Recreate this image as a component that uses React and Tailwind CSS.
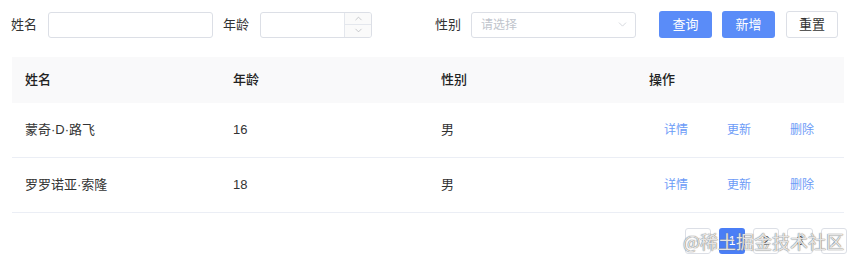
import { ChevronUp, ChevronDown, ChevronLeft, ChevronRight } from 'lucide-react'

const ROWS = [
  { name: '蒙奇·D·路飞', age: 16, sex: '男' },
  { name: '罗罗诺亚·索隆', age: 18, sex: '男' },
]

const font = { fontFamily: '"Liberation Sans", "Noto Sans CJK SC", sans-serif' }

export default function App() {
  return (
    <div className="relative w-[856px] h-[267px] bg-white text-[13px] text-[#333]" style={font}>
      {/* Search bar */}
      <div className="flex items-center h-[48px] pt-[1px]">
        <label className="ml-[11px] w-[37px] text-[#333]">姓名</label>
        <div className="w-[165px] h-[26px] border border-[#dcdfe6] rounded-[3px]" />
        <label className="ml-[10px] w-[37px]">年龄</label>
        <div className="flex w-[112px] h-[26px] border border-[#dcdfe6] rounded-[3px] overflow-hidden">
          <div className="flex-1" />
          <div className="w-[27px] flex flex-col border-l border-[#e4e7ed] bg-[#fafafa] text-[#b0b3b8]">
            <div className="flex-1 flex items-center justify-center border-b border-[#e4e7ed]"><ChevronUp size={11} strokeWidth={1.5} /></div>
            <div className="flex-1 flex items-center justify-center"><ChevronDown size={11} strokeWidth={1.5} /></div>
          </div>
        </div>
        <label className="ml-[63px] w-[36px]">性别</label>
        <div className="flex items-center justify-between w-[165px] h-[26px] border border-[#dcdfe6] rounded-[3px] pl-[9px] pr-[6px] text-[12px] text-[#c0c4cc]">
          <span>请选择</span>
          <ChevronDown size={13} strokeWidth={1.2} className="text-[#c0c4cc]" />
        </div>
        <button className="ml-[23px] w-[53px] h-[27px] rounded-[3px] bg-[#5a8cf8] text-white">查询</button>
        <button className="ml-[10px] w-[53px] h-[27px] rounded-[3px] bg-[#5a8cf8] text-white">新增</button>
        <button className="ml-[11px] w-[52px] h-[27px] rounded-[3px] border border-[#dcdfe6] bg-white text-[#333]">重置</button>
      </div>

      {/* Table */}
      <div className="mx-[12px] mt-[9px]">
        <div className="grid grid-cols-4 h-[46px] items-center bg-[#f9f9fa] font-medium text-[#222]">
          <div className="pl-[13px]">姓名</div>
          <div className="pl-[13px]">年龄</div>
          <div className="pl-[13px]">性别</div>
          <div className="pl-[13px]">操作</div>
        </div>
        {ROWS.map(r => (
          <div key={r.name} className="grid grid-cols-4 h-[55px] items-center border-b border-[#ebeef5]">
            <div className="pl-[13px]">{r.name}</div>
            <div className="pl-[13px]">{r.age}</div>
            <div className="pl-[13px]">{r.sex}</div>
            <div className="pl-[28px] flex gap-[39px] text-[12px] text-[#6c9bf7]">
              <span>详情</span><span>更新</span><span>删除</span>
            </div>
          </div>
        ))}
      </div>

      {/* Pagination */}
      <div className="flex justify-end gap-[8px] mt-[15px] mr-[9px] text-[12px]">
        <div className="w-[26px] h-[26px] flex items-center justify-center border border-[#dcdfe6] rounded-[3px] text-[#c0c4cc]"><ChevronLeft size={12} /></div>
        <div className="w-[26px] h-[26px] flex items-center justify-center rounded-[3px] bg-[#4a7ef6] text-white">1</div>
        <div className="w-[26px] h-[26px] flex items-center justify-center border border-[#dcdfe6] rounded-[3px]">2</div>
        <div className="w-[26px] h-[26px] flex items-center justify-center border border-[#dcdfe6] rounded-[3px]">3</div>
        <div className="w-[26px] h-[26px] flex items-center justify-center border border-[#dcdfe6] rounded-[3px] text-[#999]"><ChevronRight size={12} /></div>
      </div>

      {/* Watermark */}
      <div className="absolute left-[683px] top-[229px] text-[18px] leading-[24px] text-white/80 [text-shadow:0_0_1px_#777,0_0_1px_#777]" style={{ fontFamily: '"Noto Sans CJK SC", sans-serif' }}>@稀土掘金技术社区</div>
    </div>
  )
}
